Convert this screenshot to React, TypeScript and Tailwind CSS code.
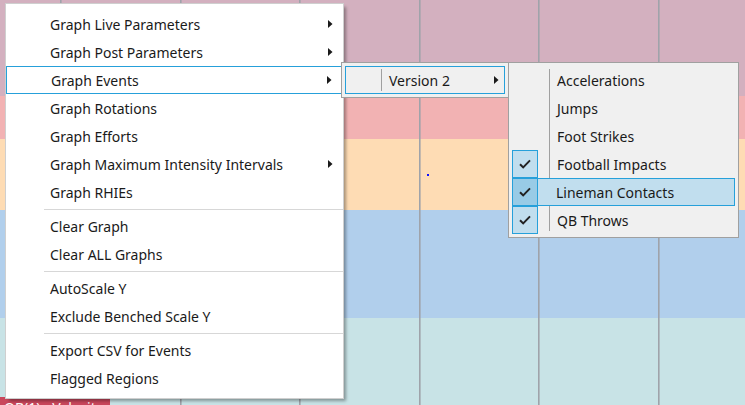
import React from 'react';

type Item = { label: string; sub?: boolean } | 'sep';

const mainItems: Item[] = [
  { label: 'Graph Live Parameters', sub: true },
  { label: 'Graph Post Parameters', sub: true },
  { label: 'Graph Events', sub: true },
  { label: 'Graph Rotations' },
  { label: 'Graph Efforts' },
  { label: 'Graph Maximum Intensity Intervals', sub: true },
  { label: 'Graph RHIEs' },
  'sep',
  { label: 'Clear Graph' },
  { label: 'Clear ALL Graphs' },
  'sep',
  { label: 'AutoScale Y' },
  { label: 'Exclude Benched Scale Y' },
  'sep',
  { label: 'Export CSV for Events' },
  { label: 'Flagged Regions' },
];

const events = [
  { label: 'Accelerations', checked: false },
  { label: 'Jumps', checked: false },
  { label: 'Foot Strikes', checked: false },
  { label: 'Football Impacts', checked: true },
  { label: 'Lineman Contacts', checked: true, active: true },
  { label: 'QB Throws', checked: true },
];

const bands = [
  { h: 'h-[96px]', bg: 'bg-[#d3b0bf]' },
  { h: 'h-[43px]', bg: 'bg-[#f2b2b3]' },
  { h: 'h-[71px]', bg: 'bg-[#fedcb4]' },
  { h: 'h-[108px]', bg: 'bg-[#b1cfec]' },
  { h: 'h-[87px]', bg: 'bg-[#c8e3e6]' },
];

const gridX = [60, 180, 299, 419, 538, 658];

function Arrow() {
  return (
    <svg width="5" height="8" viewBox="0 0 5 8" className="shrink-0">
      <path d="M0 0 L4.5 4 L0 8 Z" fill="#1a1a1a" />
    </svg>
  );
}

function Check() {
  return (
    <svg width="12" height="10" viewBox="0 0 12 10">
      <path d="M1 5.2 L4.2 8.4 L11 1.4" fill="none" stroke="#222" strokeWidth="2" />
    </svg>
  );
}

export default function App() {
  return (
    <div
      className="relative w-[745px] h-[405px] overflow-hidden text-[14px] text-[#1a1a1a]"
      style={{ fontFamily: '"Noto Sans", "Open Sans", sans-serif' }}
    >
      {/* chart background */}
      <div className="flex flex-col">
        {bands.map((b, i) => (
          <div key={i} className={`${b.h} ${b.bg}`} />
        ))}
      </div>
      <svg className="absolute left-0 top-0" width="745" height="405">
        {gridX.map((x) => (
          <rect key={x} x={x} y={0} width={1.6} height={405} fill="#9fa3aa" />
        ))}
        <rect x={427} y={174} width={2} height={2} fill="#1010ff" />
      </svg>

      {/* trace label */}
      <div className="absolute left-0 top-[397px] h-[20px] w-[110px] bg-[#c9475c] pl-[4px] text-white leading-[18px] pt-[2px]">
        QB(1) - Velocity
      </div>

      {/* main context menu */}
      <div className="absolute left-[6px] top-[4px] w-[337px] h-[394px] bg-white pt-[6px] shadow-[0_0_0_1px_#cfcfcf,3px_3px_3px_rgba(0,0,0,0.35)]">
        {mainItems.map((it, i) =>
          it === 'sep' ? (
            <div key={i} className="h-[6px] flex items-center pl-[38px]">
              <div className="h-px w-full bg-[#d7d7d7]" />
            </div>
          ) : (
            <div
              key={i}
              className={`h-[28px] flex items-center justify-between pl-[44px] pr-[10px] ${
                it.label === 'Graph Events' ? 'border border-[#26a0da] pl-[43px] pr-[9px]' : ''
              }`}
            >
              <span>{it.label}</span>
              {it.sub && <Arrow />}
            </div>
          )
        )}
      </div>

      {/* Graph Events submenu */}
      <div className="absolute left-[341px] top-[62px] w-[168px] h-[36px] bg-[#f0f0f0] border border-[#a0a0a0] p-[3px]">
        <div className="relative h-[28px] border border-[#26a0da] flex items-center justify-between pl-[43px] pr-[5px]">
          <div className="absolute left-[35px] top-[2px] bottom-[2px] w-px bg-[#a0a0a0]" />
          <span>Version 2</span>
          <Arrow />
        </div>
      </div>

      {/* Version 2 submenu */}
      <div className="absolute left-[508px] top-[62px] w-[231px] h-[176px] bg-[#f0f0f0] border border-[#a0a0a0] pt-[3px] px-[3px]">
        <div className="absolute left-[40px] top-[6px] bottom-[6px] w-px bg-[#a0a0a0]" />
        {events.map((e) => (
          <div
            key={e.label}
            className={`relative h-[28px] flex items-center ${
              e.active ? 'bg-[#c1deee] border border-[#26a0da]' : ''
            }`}
          >
            <div
              className={`h-[28px] w-[26px] flex items-center justify-center ${
                e.active ? '-ml-px -my-px bg-[#98cbe6] border border-[#26a0da]' : ''
              } ${e.checked && !e.active ? 'bg-[#c1deee] border border-[#26a0da]' : ''}`}
            >
              {e.checked && <Check />}
            </div>
            <span className={e.active ? 'ml-[18px]' : 'ml-[19px]'}>{e.label}</span>
          </div>
        ))}
      </div>
    </div>
  );
}
